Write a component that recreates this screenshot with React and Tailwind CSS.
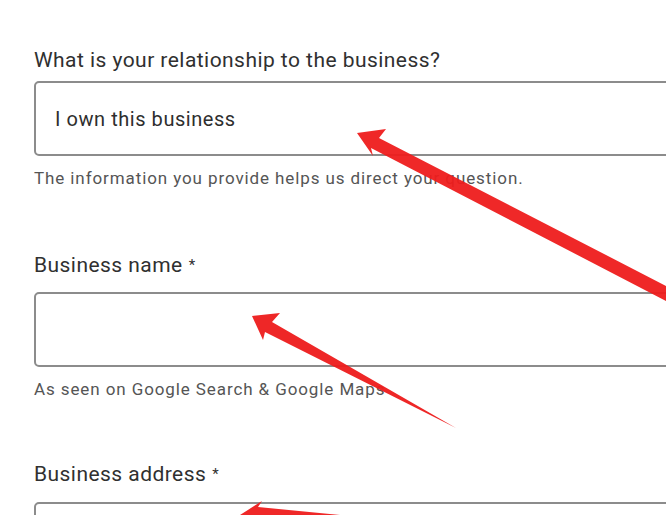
import React from "react";

function Arrows() {
  return (
    <svg
      className="absolute inset-0 pointer-events-none"
      width="666"
      height="515"
      viewBox="0 0 666 515"
    >
      <g fill="#ee1c1c" opacity="0.95">
        {/* arrow 1 */}
        <polygon points="357,133 386,129 379,138 672,289 672,304 371,148 373,156" />
        {/* arrow 2 */}
        <polygon points="252,316 280,313 272,322 456,428 265,332 263,340" />
        {/* arrow 3 */}
        <polygon points="240,515 262,501 258,507 340,515" />
      </g>
    </svg>
  );
}

function Field({ label, required, value, helper, mt, labelGap, helperGap }) {
  return (
    <div className={mt}>
      <div className="text-[21px] leading-[24px] text-[#303030] tracking-[0.45px]">
        {label}
        {required && <span className="text-[15px] align-top ml-[6px]">*</span>}
      </div>
      <div
        className={`${labelGap} h-[75px] w-[720px] rounded-[5px] border-2 border-[#8c8c8c] bg-white flex items-center pl-[19px]`}
      >
        {value && (
          <span className="text-[20px] text-[#2e2e2e] tracking-[0.55px]">{value}</span>
        )}
      </div>
      {helper && (
        <div className={`${helperGap} text-[17px] leading-[20px] text-[#555] tracking-[0.9px]`}>
          {helper}
        </div>
      )}
    </div>
  );
}

export default function App() {
  return (
    <div
      className="relative w-[666px] h-[515px] overflow-hidden bg-white"
      style={{ fontFamily: "Roboto, 'Noto Sans', sans-serif" }}
    >
      <div className="flex flex-col pl-[34px] pt-[48px]">
        <Field
          label="What is your relationship to the business?"
          value="I own this business"
          helper="The information you provide helps us direct your question."
          mt="mt-0"
          labelGap="mt-[9px]"
          helperGap="mt-[12px]"
        />
        <Field
          label="Business name"
          required
          helper="As seen on Google Search & Google Maps"
          mt="mt-[65px]"
          labelGap="mt-[15px]"
          helperGap="mt-[12px]"
        />
        <Field
          label="Business address"
          required
          mt="mt-[63px]"
          labelGap="mt-[16px]"
        />
      </div>
      <Arrows />
    </div>
  );
}
